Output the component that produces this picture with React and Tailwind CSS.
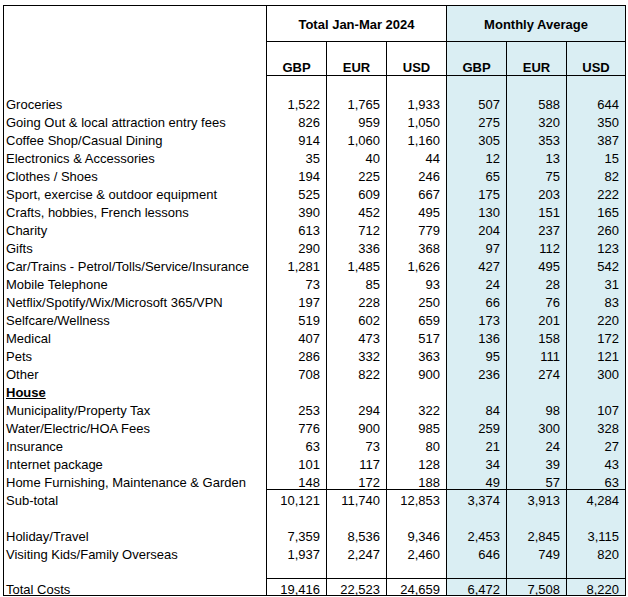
import React from "react";

const BLUE = "bg-[#daeef3]";

const ITEMS = [
  ["Groceries", "1,522", "1,765", "1,933", "507", "588", "644"],
  ["Going Out & local attraction entry fees", "826", "959", "1,050", "275", "320", "350"],
  ["Coffee Shop/Casual Dining", "914", "1,060", "1,160", "305", "353", "387"],
  ["Electronics & Accessories", "35", "40", "44", "12", "13", "15"],
  ["Clothes / Shoes", "194", "225", "246", "65", "75", "82"],
  ["Sport, exercise & outdoor equipment", "525", "609", "667", "175", "203", "222"],
  ["Crafts, hobbies, French lessons", "390", "452", "495", "130", "151", "165"],
  ["Charity", "613", "712", "779", "204", "237", "260"],
  ["Gifts", "290", "336", "368", "97", "112", "123"],
  ["Car/Trains - Petrol/Tolls/Service/Insurance", "1,281", "1,485", "1,626", "427", "495", "542"],
  ["Mobile Telephone", "73", "85", "93", "24", "28", "31"],
  ["Netflix/Spotify/Wix/Microsoft 365/VPN", "197", "228", "250", "66", "76", "83"],
  ["Selfcare/Wellness", "519", "602", "659", "173", "201", "220"],
  ["Medical", "407", "473", "517", "136", "158", "172"],
  ["Pets", "286", "332", "363", "95", "111", "121"],
  ["Other", "708", "822", "900", "236", "274", "300"],
  ["House"],
  ["Municipality/Property Tax", "253", "294", "322", "84", "98", "107"],
  ["Water/Electric/HOA Fees", "776", "900", "985", "259", "300", "328"],
  ["Insurance", "63", "73", "80", "21", "24", "27"],
  ["Internet package", "101", "117", "128", "34", "39", "43"],
  ["Home Furnishing, Maintenance & Garden", "148", "172", "188", "49", "57", "63"],
];

const CURRENCIES = ["GBP", "EUR", "USD", "GBP", "EUR", "USD"];

// one spreadsheet line: label column + six number columns
const Row = ({ label, values = [], top = false, short = false, house = false }) => (
  <div className={`flex ${short ? "h-[17px]" : "h-[18px]"}`}>
    <div
      className={`w-[262px] pl-[2px] pt-[5px] leading-[13px] whitespace-nowrap ${
        house ? "font-bold underline" : ""
      }`}>
      {label}
    </div>
    {[0, 1, 2, 3, 4, 5].map((i) => (
      <div
        key={i}
        className={`${i === 5 ? "w-[59px]" : "w-[60px]"} border-l border-black text-right pr-[6px] leading-[13px] ${
          i >= 3 ? BLUE : ""
        } ${top ? "border-t pt-[4px]" : "pt-[5px]"}`}>
        {values[i]}
      </div>
    ))}
  </div>
);

const App = () => {
  return (
    <div className="min-h-screen bg-white pt-[5px] pl-[3px] font-['Liberation_Sans',Arial,sans-serif] text-[13px] text-black">
      <div className="w-[623px] border border-black">
        {/* header */}
        <div className="flex">
          <div className="w-[262px]" />
          <div className="flex flex-col">
            <div className="flex h-[36px]">
              <div className="w-[180px] border-l border-b border-black pt-[12px] text-center font-bold leading-[13px]">
                Total Jan-Mar 2024
              </div>
              <div className={`w-[179px] border-l border-b border-black pt-[12px] text-center font-bold leading-[13px] ${BLUE}`}>
                Monthly Average
              </div>
            </div>
            <div className="flex h-[34px]">
              {CURRENCIES.map((c, i) => (
                <div
                  key={i}
                  className={`${i === 5 ? "w-[59px]" : "w-[60px]"} border-l border-b border-black pt-[19px] text-center font-bold leading-[13px] ${
                    i >= 3 ? BLUE : ""
                  }`}>
                  {c}
                </div>
              ))}
            </div>
          </div>
        </div>

        <Row short />

        {ITEMS.map(([label, ...values]) => (
          <Row key={label} label={label} values={values} house={label === "House"} />
        ))}

        <Row
          label="Sub-total"
          values={["10,121", "11,740", "12,853", "3,374", "3,913", "4,284"]}
          top
        />
        <Row />
        <Row
          label="Holiday/Travel"
          values={["7,359", "8,536", "9,346", "2,453", "2,845", "3,115"]}
        />
        <Row
          label="Visiting Kids/Family Overseas"
          values={["1,937", "2,247", "2,460", "646", "749", "820"]}
        />
        <Row short />
        <Row
          label="Total Costs"
          values={["19,416", "22,523", "24,659", "6,472", "7,508", "8,220"]}
          top
          short
        />
      </div>
    </div>
  );
};

export default App;
